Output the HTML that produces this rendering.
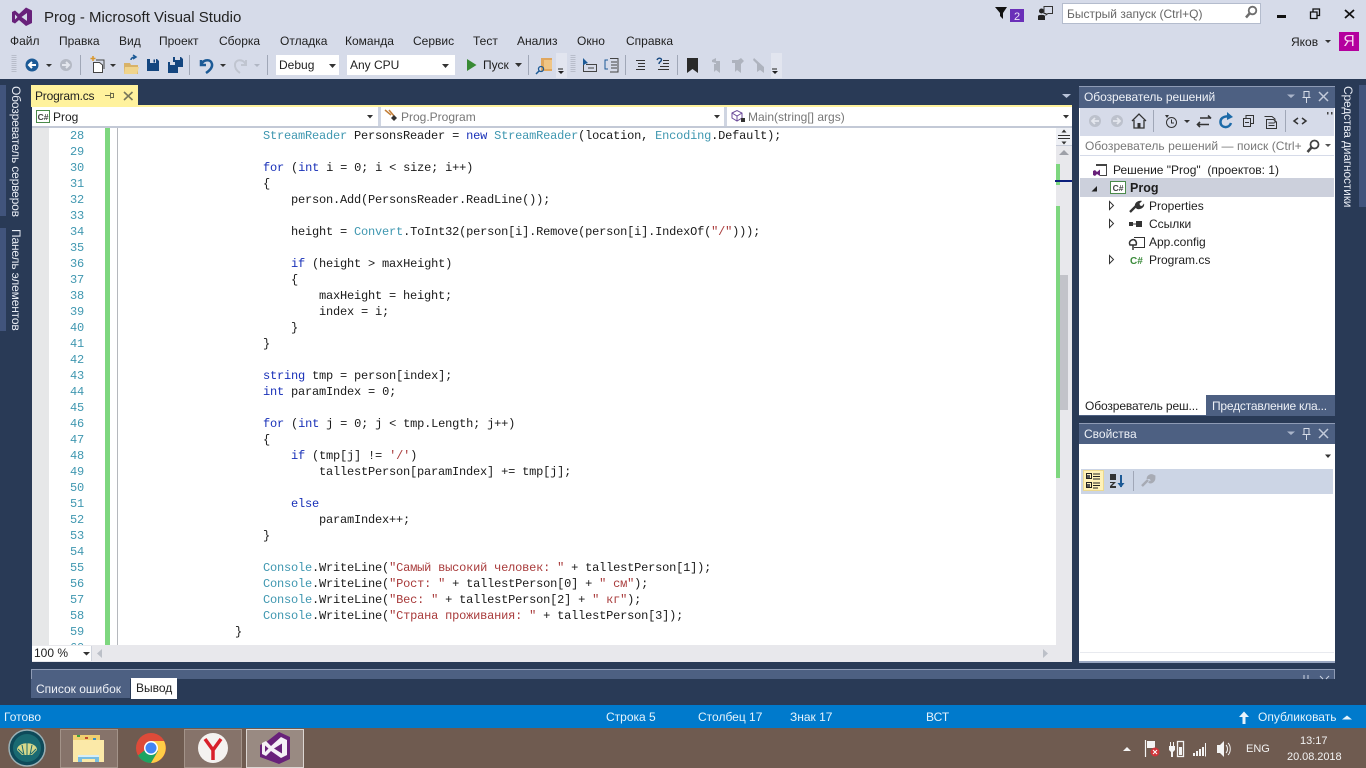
<!DOCTYPE html>
<html lang="ru"><head><meta charset="utf-8"><title>Prog - Microsoft Visual Studio</title>
<style>
html,body{margin:0;padding:0;width:1366px;height:768px;overflow:hidden;background:#293a56}
body{position:relative;font-family:"Liberation Sans","DejaVu Sans",sans-serif;font-size:12px;color:#1e1e1e}
.b{position:absolute}
.t{position:absolute;white-space:nowrap;line-height:16px;font-size:12px}
.v{position:absolute;white-space:nowrap;line-height:14px;font-size:12px;color:#e8ecf4;transform-origin:0 0;transform:rotate(90deg);letter-spacing:-.17px}
pre{position:absolute;margin:0;font-family:"Liberation Mono","DejaVu Sans Mono",monospace;font-size:12px;line-height:16px;letter-spacing:-.2px;color:#1a1a1a}
i{font-style:normal;color:#1830b8}
u{text-decoration:none;color:#3f97b0}
s{text-decoration:none;color:#a83a3a}
</style></head><body>
<!-- chrome -->
<div class="b" style="left:0;top:0;width:1366px;height:79px;background:#d6dbe9"></div>
<div class="b" style="left:556px;top:53px;width:11px;height:25px;background:#e2e5ef"></div>
<div class="b" style="left:771px;top:53px;width:11px;height:25px;background:#e2e5ef"></div>
<div class="b" style="left:0;top:79px;width:1366px;height:626px;background:#293a56"></div>
<div class="b" style="left:0;top:705px;width:1366px;height:23px;background:#007acc"></div>
<div class="b" style="left:0;top:728px;width:1366px;height:40px;background:#6f5b50"></div>

<div class="t" style="left:44px;top:9px;font-size:15px;line-height:18px;color:#222">Prog - Microsoft Visual Studio</div>
<div class="t" style="left:10px;top:33px">Файл</div>
<div class="t" style="left:59px;top:33px">Правка</div>
<div class="t" style="left:119px;top:33px">Вид</div>
<div class="t" style="left:159px;top:33px">Проект</div>
<div class="t" style="left:219px;top:33px">Сборка</div>
<div class="t" style="left:280px;top:33px">Отладка</div>
<div class="t" style="left:345px;top:33px">Команда</div>
<div class="t" style="left:413px;top:33px">Сервис</div>
<div class="t" style="left:473px;top:33px">Тест</div>
<div class="t" style="left:517px;top:33px">Анализ</div>
<div class="t" style="left:577px;top:33px">Окно</div>
<div class="t" style="left:626px;top:33px">Справка</div>

<div class="b" style="left:276px;top:55px;width:63px;height:20px;background:#fff"></div>
<div class="t" style="left:279px;top:57px">Debug</div>
<div class="b" style="left:347px;top:55px;width:108px;height:20px;background:#fff"></div>
<div class="t" style="left:350px;top:57px">Any CPU</div>
<div class="t" style="left:483px;top:57px">Пуск</div>

<div class="b" style="left:1062px;top:3px;width:197px;height:19px;background:#fff;border:1px solid #b4bccd"></div>
<div class="t" style="left:1067px;top:6px;color:#666">Быстрый запуск (Ctrl+Q)</div>
<div class="t" style="left:1291px;top:34px">Яков</div>
<div class="b" style="left:1339px;top:32px;width:20px;height:19px;background:#b4009e;color:#f7d3ef;font-size:16px;line-height:19px;text-align:center">Я</div>

<!-- side bars -->
<div class="b" style="left:0;top:85px;width:6px;height:131px;background:#41547c"></div>
<div class="b" style="left:0;top:228px;width:6px;height:103px;background:#41547c"></div>
<div class="v" style="left:23px;top:86px">Обозреватель серверов</div>
<div class="v" style="left:23px;top:229px">Панель элементов</div>
<div class="b" style="left:1359px;top:85px;width:7px;height:122px;background:#41547c"></div>
<div class="v" style="left:1355px;top:86px">Средства диагностики</div>

<!-- tab -->
<div class="b" style="left:31px;top:85px;width:107px;height:20px;background:#fff29d"></div>
<div class="t" style="left:35px;top:88px;color:#222;letter-spacing:-.2px">Program.cs</div>
<div class="b" style="left:31px;top:105px;width:1041px;height:2px;background:#fff29d"></div>

<!-- nav bar -->
<div class="b" style="left:32px;top:107px;width:346px;height:19px;background:#fff"></div>
<div class="b" style="left:381px;top:107px;width:343px;height:19px;background:#fff"></div>
<div class="b" style="left:727px;top:107px;width:345px;height:19px;background:#fff"></div>
<div class="b" style="left:32px;top:126px;width:1040px;height:2px;background:#c3c9d6"></div>
<div class="b" style="left:378px;top:107px;width:3px;height:19px;background:#cfd5e2"></div>
<div class="b" style="left:724px;top:107px;width:3px;height:19px;background:#cfd5e2"></div>
<div class="t" style="left:53px;top:109px">Prog</div>
<div class="t" style="left:401px;top:109px;color:#777">Prog.Program</div>
<div class="t" style="left:748px;top:109px;color:#777">Main(string[] args)</div>

<!-- editor -->
<div class="b" style="left:32px;top:128px;width:1040px;height:534px;background:#e8e8ec"></div>
<div class="b" style="left:49px;top:128px;width:1007px;height:517px;background:#fff"></div>
<div class="b" style="left:32px;top:128px;width:17px;height:517px;background:#e6e7e8"></div>
<div class="b" style="left:105px;top:128px;width:5px;height:517px;background:#7ed77f"></div>
<div class="b" style="left:117px;top:128px;width:1px;height:517px;background:#b5b8bd"></div>
<div class="b" style="left:49px;top:128px;width:1007px;height:517px;overflow:hidden">
<pre style="left:0;top:0;width:35px;text-align:right;color:#3f97b0">28
29
30
31
32
33
34
35
36
37
38
39
40
41
42
43
44
45
46
47
48
49
50
51
52
53
54
55
56
57
58
59
60</pre>
<pre style="left:74px;top:0">                    <u>StreamReader</u> PersonsReader = <i>new</i> <u>StreamReader</u>(location, <u>Encoding</u>.Default);

                    <i>for</i> (<i>int</i> i = 0; i &lt; size; i++)
                    {
                        person.Add(PersonsReader.ReadLine());

                        height = <u>Convert</u>.ToInt32(person[i].Remove(person[i].IndexOf(<s>"/"</s>)));

                        <i>if</i> (height &gt; maxHeight)
                        {
                            maxHeight = height;
                            index = i;
                        }
                    }

                    <i>string</i> tmp = person[index];
                    <i>int</i> paramIndex = 0;

                    <i>for</i> (<i>int</i> j = 0; j &lt; tmp.Length; j++)
                    {
                        <i>if</i> (tmp[j] != <s>'/'</s>)
                            tallestPerson[paramIndex] += tmp[j];

                        <i>else</i>
                            paramIndex++;
                    }

                    <u>Console</u>.WriteLine(<s>"Самый высокий человек: "</s> + tallestPerson[1]);
                    <u>Console</u>.WriteLine(<s>"Рост: "</s> + tallestPerson[0] + <s>" см"</s>);
                    <u>Console</u>.WriteLine(<s>"Вес: "</s> + tallestPerson[2] + <s>" кг"</s>);
                    <u>Console</u>.WriteLine(<s>"Страна проживания: "</s> + tallestPerson[3]);
                }</pre>
</div>
<!-- scrollbar -->
<div class="b" style="left:1056px;top:128px;width:16px;height:18px;background:#eef0f5;border-bottom:1px solid #c6cbd8;box-sizing:border-box"></div>
<div class="b" style="left:1060px;top:275px;width:8px;height:135px;background:#c2c3c9"></div>
<div class="b" style="left:1056px;top:164px;width:4px;height:21px;background:#7ed77f"></div>
<div class="b" style="left:1056px;top:206px;width:4px;height:272px;background:#7ed77f"></div>
<div class="b" style="left:1055px;top:180px;width:17px;height:2px;background:#0b1f7c"></div>
<!-- zoom -->
<div class="b" style="left:32px;top:646px;width:59px;height:15px;background:#fff;border-right:1px solid #cfd3dc"></div>
<div class="t" style="left:34px;top:646px;line-height:15px">100 %</div>

<!-- solution panel -->
<div class="b" style="left:1079px;top:86px;width:256px;height:329px;background:#fff"></div>
<div class="b" style="left:1079px;top:86px;width:256px;height:22px;background:#4d6082"></div>
<div class="b" style="left:1079px;top:86px;width:256px;height:1px;background:#8e9bb5"></div>
<div class="t" style="left:1084px;top:89px;color:#eef1f7;letter-spacing:-.05px">Обозреватель решений</div>
<div class="b" style="left:1080px;top:108px;width:254px;height:28px;background:#d6dbe9"></div>
<div class="t" style="left:1085px;top:138px;color:#777;letter-spacing:.05px">Обозреватель решений — поиск (Ctrl+</div>
<div class="b" style="left:1080px;top:155px;width:254px;height:1px;background:#d6dbe9"></div>
<div class="t" style="left:1113px;top:162px">Решение "Prog"&nbsp; (проектов: 1)</div>
<div class="b" style="left:1080px;top:178px;width:254px;height:19px;background:#ccd0dc"></div>
<div class="t" style="left:1130px;top:180px;font-weight:bold;font-size:12.5px">Prog</div>
<div class="t" style="left:1149px;top:198px">Properties</div>
<div class="t" style="left:1149px;top:216px">Ссылки</div>
<div class="t" style="left:1149px;top:234px">App.config</div>
<div class="t" style="left:1149px;top:252px">Program.cs</div>
<div class="b" style="left:1206px;top:395px;width:129px;height:20px;background:#4d6082"></div>
<div class="b" style="left:1079px;top:415px;width:256px;height:1px;background:#4d6082"></div>
<div class="t" style="left:1085px;top:398px;letter-spacing:-.12px">Обозреватель реш...</div>
<div class="t" style="left:1212px;top:398px;color:#eef1f7;letter-spacing:-.2px">Представление кла...</div>

<!-- properties panel -->
<div class="b" style="left:1079px;top:423px;width:256px;height:240px;background:#fff"></div>
<div class="b" style="left:1079px;top:423px;width:256px;height:21px;background:#4d6082"></div>
<div class="b" style="left:1079px;top:423px;width:256px;height:1px;background:#8e9bb5"></div>
<div class="t" style="left:1084px;top:426px;color:#eef1f7">Свойства</div>
<div class="b" style="left:1081px;top:469px;width:252px;height:25px;background:#ccd5e5"></div>
<div class="b" style="left:1083px;top:470px;width:21px;height:21px;background:#fff2b8;border:1px solid #ecd98f;box-sizing:border-box"></div>
<div class="b" style="left:1080px;top:652px;width:254px;height:1px;background:#e8eaef"></div>
<div class="b" style="left:1079px;top:661px;width:256px;height:2px;background:#9aa7c1"></div>

<!-- bottom -->
<div class="b" style="left:31px;top:669px;width:1304px;height:10px;background:#4d6082;border:1px solid #8e9bb5;border-bottom:0;box-sizing:border-box"></div>
<div class="b" style="left:31px;top:679px;width:99px;height:19px;background:#4d6082"></div>
<div class="t" style="left:36px;top:681px;color:#eef1f7">Список ошибок</div>
<div class="b" style="left:131px;top:678px;width:46px;height:21px;background:#fff"></div>
<div class="t" style="left:136px;top:680px">Вывод</div>

<!-- status -->
<div class="t" style="left:4px;top:709px;color:#e6f3fb">Готово</div>
<div class="t" style="left:606px;top:709px;color:#e6f3fb">Строка 5</div>
<div class="t" style="left:698px;top:709px;color:#e6f3fb">Столбец 17</div>
<div class="t" style="left:790px;top:709px;color:#e6f3fb">Знак 17</div>
<div class="t" style="left:926px;top:709px;color:#e6f3fb">ВСТ</div>
<div class="t" style="left:1258px;top:709px;color:#e6f3fb">Опубликовать</div>

<!-- taskbar -->
<div class="b" style="left:60px;top:729px;width:56px;height:37px;background:#86736a;border:1px solid #a39389"></div>
<div class="b" style="left:184px;top:729px;width:56px;height:37px;background:#86736a;border:1px solid #a39389"></div>
<div class="b" style="left:246px;top:729px;width:56px;height:37px;background:#998a82;border:1px solid #dcd6d2"></div>
<div class="t" style="left:1246px;top:741px;color:#f2f2f2;font-size:11px">ENG</div>
<div class="t" style="left:1300px;top:733px;color:#f2f2f2;font-size:11px">13:17</div>
<div class="t" style="left:1287px;top:749px;color:#f2f2f2;font-size:11px;letter-spacing:-.05px">20.08.2018</div>

<!-- icons overlay -->
<svg class="b" style="left:0;top:0" width="1366" height="768" viewBox="0 0 1366 768" fill="none">
<!-- VS logo -->
<path fill-rule="evenodd" fill="#68217a" d="M12 12L15 10.500 19 14 26 7.500 32 10.500V23L26 26 19 20 15 23.500 12 22ZM15 14.500V19.500L17.500 17ZM21.500 17L27 21V13Z"/>
<!-- grips -->
<path stroke="#b8bdca" stroke-dasharray="1 1" stroke-width="5" d="M14 55V73M573 55V73"/>
<!-- back/fwd -->
<circle cx="32" cy="65" r="6.500" fill="#1c5a96"/><path stroke="#fff" stroke-width="2" d="M36 65H29M32 62L29 65 32 68"/>
<path fill="#333" d="M46 64h6l-3 3zM110 64h6l-3 3zM220 64h6l-3 3zM515 63h7l-3.500 4z"/>
<circle cx="66" cy="65" r="6" fill="#b4b9c4"/><path stroke="#e4e7ee" stroke-width="2" d="M62 65H69M66 62L69 65 66 68"/>
<path stroke="#a0a7b7" d="M80.500 55V75M189.500 55V75M267.500 55V75M528.500 55V75M625.500 55V75M677.500 55V75M1133.500 471V491M1153.500 110V132M1285.500 110V132"/>
<!-- new project -->
<path stroke="#444" fill="#fff" d="M93.500 62.500H99.500L102.500 65V72.500H93.500Z"/><path stroke="#444" d="M96 60H104V69"/><path stroke="#d9962a" stroke-width="1.500" d="M93 56V61M90.500 58.500H95.500"/>
<!-- open -->
<path fill="#d8b268" d="M124 63H130L131 65H138V74H124Z"/><path fill="#f0d48c" d="M125 67H139L137 74H124Z"/><path stroke="#1c5a96" stroke-width="1.500" d="M131 60C131 58 133 57 135 57M133 55L136 57 133 59"/>
<!-- save -->
<path fill="#14467f" d="M147 59H157L159 61V71H147Z"/><path fill="#d6dbe9" d="M150 59H156V63H150Z"/><path fill="#14467f" d="M153.500 59.500h1.500v3h-1.500z"/><path fill="#14467f" d="M147 64H159V71H147Z"/>
<path fill="#14467f" d="M173 57H181L183 59V67H173ZM168 62H176L178 64V73H168Z"/><path fill="#d6dbe9" d="M170 62h5v3h-5zM175 57h5v3h-5z"/>
<!-- undo / redo -->
<path stroke="#1c5a96" stroke-width="2.500" d="M201 60V65H206M201.500 64C204 59 211 59 212 64 212.800 68 209 71 206 73"/>
<path stroke="#c0c5d0" stroke-width="2" d="M246 60V65H241M245.500 64C243 59 236 59 235 64 234.500 68 237 71 240 73"/>
<path fill="#b0b6c3" d="M254 64h6l-3 3z"/>
<!-- combo arrows -->
<path fill="#333" d="M329 64h7l-3.500 4zM442 64h7l-3.500 4zM367 115h6l-3 3.500zM714 115h6l-3 3.500zM1063 115h6l-3 3.500zM1325 454.500h6l-3 3.500zM83 652h7l-3.500 3.500zM1325 40h6l-3 3z"/>
<!-- play -->
<path fill="#388a34" d="M467 59L476.500 65 467 71Z"/>
<!-- find in files -->
<path fill="#e0a75e" d="M541 58H552V71H541Z"/><path fill="#f0c584" d="M544 60H552V69H544Z"/><circle cx="541" cy="69" r="2.500" stroke="#1c5a96" stroke-width="1.300"/><path stroke="#1c5a96" stroke-width="1.500" d="M539 71L536 74"/>
<!-- overflow -->
<path fill="#222" d="M558 68.500h5v1h-5zM558 71h6l-3 3zM772 68.500h5v1h-5zM772 71h6l-3 3z"/>
<!-- debug tools -->
<path fill="#1c5a96" d="M583 58L588 63 585 64 583 66Z"/><path stroke="#444" d="M586 64.500H596.500V71.500H583.500V65"/><path stroke="#444" d="M588 68H594"/>
<path stroke="#1c5a96" d="M608 60H605V69H608"/><path stroke="#444" d="M610 58.500H618V72H610M611 62H617M611 65H617M611 68H617"/>
<path stroke="#333" d="M636 60.500H645M638 63.500H645M638 66.500H645M636 69.500H645"/>
<path stroke="#14467f" stroke-width="1.400" d="M657 60C658 57 663 58 661 61 660 62 659 62 659 64"/><path stroke="#333" d="M663 60.500H669M663 63.500H669M660 66.500H669M658 69.500H669"/>
<path fill="#2a2a2a" d="M687 58H698V73L692.500 69 687 73Z"/>
<path fill="#aeb3be" d="M712 60L716 58V61H720V73L716 70 714 72V64H716V63L712 62ZM732 60H738L741 58 744 61 741 64V73L737 70 735 72V63H732ZM754 58L764 67V73L760 70 757 72V64L753 60Z"/>
<!-- top-right -->
<path fill="#111" d="M995 7H1007L1003 13V19L1000 16V13Z"/>
<rect x="1010" y="9" width="14" height="13" fill="#6a2fb8"/>
<text x="1017" y="20" font-family="Liberation Sans" font-size="11" fill="#ece4f8" text-anchor="middle">2</text>
<circle cx="1041.500" cy="11" r="2.500" fill="#222"/><path fill="#222" d="M1038 20V16C1038 14.500 1045 14.500 1045 16V20Z"/><path stroke="#333" d="M1044 6.500H1052.500V13.500H1048L1046 15V13.500H1044Z"/>
<circle cx="1252.500" cy="10.500" r="3.800" stroke="#6e6e6e" stroke-width="1.800"/><path stroke="#6e6e6e" stroke-width="2.500" d="M1249.500 13.500L1246 17.500"/>
<path fill="#111" d="M1277 15h9v3h-9z"/>
<path stroke="#111" stroke-width="1.300" d="M1310.500 12H1317V18.500H1310.500Z M1313 11.500V9H1319.500V15.500H1317"/>
<path stroke="#111" stroke-width="1.800" d="M1345 10L1354 18M1354 10L1345 18"/>
<!-- tab icons -->
<path stroke="#6a6a4a" d="M105 95.500H110M110.500 92.500V98.500M110.500 93.500H113.500M110.500 97.500H113.500M113.500 93V98"/>
<path stroke="#77775a" stroke-width="1.600" d="M124 92L132.500 100M132.500 92L124 100"/>
<path fill="#b8c3d8" d="M1062 94h9l-4.500 4z"/>
<!-- C# nav icon -->
<rect x="36.500" y="110.500" width="13" height="12" fill="#fff" stroke="#4a8a4a"/>
<text x="43" y="120" font-family="Liberation Sans" font-size="8.500" font-weight="bold" fill="#444" text-anchor="middle">C#</text>
<!-- class/method icons -->
<path stroke="#c4803a" stroke-width="1.500" d="M385 110L391 115M389 110L394 116"/><path fill="#333" d="M391 118l3-3 3 3-3 3z"/>
<path stroke="#6b4a9a" d="M732 113L737 110.500 742 113V118L737 121 732 118ZM732 113L737 116 742 113M737 116V121"/><rect x="741" y="118" width="4" height="4" fill="#333"/>
<!-- scrollbar arrows -->
<path stroke="#333" d="M1058 135.500H1070M1058 138.500H1070"/><path fill="#333" d="M1064 129.500l-2.500 3h5zM1064 144.500l-2.500-3h5z"/>
<path fill="#9ea0a8" d="M1064 150l-5 5h10z"/>
<path fill="#bcc0c8" d="M97 653.500l5-4.500v9zM1048 653.500l-5-4.500v9z"/>
<!-- panel header icons -->
<path fill="#aab5ca" d="M1287 94.500h8l-4 3.500zM1287 431.500h8l-4 3.500z"/>
<path stroke="#d6dce8" d="M1304 91.500V97.500H1309V91.500ZM1306.500 98V103M1302.500 97.500H1310.500"/>
<path stroke="#d6dce8" d="M1304 428.500V434.500H1309V428.500ZM1306.500 435V440M1302.500 434.500H1310.500"/>
<path stroke="#c3cbdb" stroke-width="1.500" d="M1319 92L1328 101M1328 92L1319 101M1319 429L1328 438M1328 429L1319 438"/>
<!-- solution toolbar -->
<circle cx="1095" cy="121" r="6" fill="#bcc1cc"/><path stroke="#e4e7ee" stroke-width="1.800" d="M1099 121H1092M1095 118L1092 121 1095 124"/>
<circle cx="1117" cy="121" r="6" fill="#bcc1cc"/><path stroke="#e4e7ee" stroke-width="1.800" d="M1113 121H1120M1117 118L1120 121 1117 124"/>
<path stroke="#333" stroke-width="1.300" d="M1132 121L1139 114 1146 121M1134 120V128H1144V120"/><path fill="#333" d="M1137.500 123h3v5h-3z"/>
<circle cx="1171.500" cy="122.500" r="5" stroke="#333"/><path stroke="#333" d="M1171.500 119.500V123H1174"/><path fill="#333" d="M1165 115h4l-2 3z"/>
<path fill="#333" d="M1184 120h6l-3 3z"/>
<path stroke="#333" stroke-width="1.600" d="M1200 118H1210M1208 115.500L1211 118.500M1198 124.500H1209M1200 122L1197.500 124.500 1200 127"/>
<path stroke="#1c6aa8" stroke-width="2.500" d="M1230.500 117.500C1227 115 1220 117 1220.500 122.500 1221 128 1229 129 1231 123"/><path fill="#1c6aa8" d="M1227 112V120L1233 117Z"/>
<path stroke="#333" d="M1243.500 118.500H1250.500V126.500H1243.500ZM1246 118V115.500H1253.500V123.500H1251M1245 122.500H1249"/>
<path stroke="#333" d="M1264.500 116.500H1272L1275 119V123M1266.500 119.500H1273.500L1276.500 122V128.500H1266.500ZM1268.500 123H1274.500M1268.500 125.500H1274.500"/>
<path stroke="#333" stroke-width="1.500" d="M1298 118L1294 121 1298 124M1302 118L1306 121 1302 124"/>
<path fill="#444" d="M1327 112h1.500v2.500H1327zM1331 112h1.500v2.500H1331z"/>
<circle cx="1314.500" cy="144.500" r="4" stroke="#444" stroke-width="1.800"/><path stroke="#444" stroke-width="2.500" d="M1311.500 147.500L1307.500 152"/>
<path fill="#555" d="M1325 144h6l-3 3z"/>
<!-- tree icons -->
<path stroke="#444" d="M1096 164.500H1106.500V175.500H1100"/><path fill="#444" d="M1096 164h10v2h-10z"/>
<path fill="#68217a" d="M1093 171L1095 170 1097 172 1100 169.500V176L1097 174 1095 176 1093 175Z"/>
<path fill="#222" d="M1091.500 191.500l5.500-5.500v5.500z"/>
<rect x="1110.500" y="181.500" width="15" height="12" fill="#fff" stroke="#4a8a4a"/>
<text x="1118" y="191" font-family="Liberation Sans" font-size="8.500" font-weight="bold" fill="#444" text-anchor="middle">C#</text>
<path stroke="#333" fill="#fff" d="M1109.500 201.500L1113.500 205.500 1109.500 209.500ZM1109.500 219.500L1113.500 223.500 1109.500 227.500ZM1109.500 255.500L1113.500 259.500 1109.500 263.500Z"/>
<path stroke="#333" stroke-width="2.300" d="M1130 212L1136 206"/><path fill="#333" d="M1135 207C1134 203 1138 200 1142 201L1139.500 203.500 1140 205.500 1142 206 1144 203.500C1145 207 1141 210 1137 209Z"/>
<path fill="#333" d="M1129 222h4v4h-4zM1136 221h6v6h-6z"/><path stroke="#333" d="M1133 224H1136"/>
<path stroke="#333" d="M1134 237.500H1144.500V247.500H1134"/><path stroke="#333" stroke-width="1.500" d="M1133.500 239.500C1130.500 240 1128.500 242 1130 245H1136C1137 243 1136 240 1133.500 239.500M1133 245V250"/>
<text x="1130" y="264" font-family="Liberation Sans" font-size="10" font-weight="bold" fill="#3a8a3a">C#</text>
<!-- properties -->
<path fill="#555" d="M1087 475h3v3h-3zM1087 484h3v3h-3z"/><path stroke="#222" d="M1086.500 473.500H1091.500V478.500H1086.500ZM1086.500 482.500H1091.500V487.500H1086.500ZM1093 474H1100M1093 476.500H1100M1093 479H1100M1093 483H1100M1093 485.500H1100M1093 488H1098"/>
<path fill="#333" d="M1110 474h6v6h-6zM1110 482h6l-4 4h4v2h-6v-2l3-3h-3z"/><path stroke="#1c5a96" stroke-width="2" d="M1121 475V487"/><path fill="#1c5a96" d="M1117.500 483h7l-3.500 4.500z"/>
<path stroke="#a7abb4" stroke-width="2.500" d="M1142 486L1148 480"/><path stroke="#a7abb4" stroke-width="2.800" d="M1148 479C1148 476 1151 475 1153 476L1150.500 478 1152 479.500 1154 478C1154 481 1151 483 1149 481.500"/>
<!-- bottom panel pin/close -->
<path stroke="#cdd4e2" d="M1304 675V679M1308 675V679M1320 676L1323 679M1329 676L1326 679"/>
<!-- status -->
<path fill="#e6f3fb" d="M1244 711.500l-5 5.500h3.500v7h3v-7H1249zM1342 719.500l5-4 5 4z"/>
<!-- taskbar: start orb -->
<circle cx="27" cy="748" r="18" fill="#0e4a5a" stroke="#9ab0b5" stroke-width="1.500"/>
<circle cx="27" cy="748" r="14" fill="#1a6a72"/>
<path fill="#d8d98a" d="M17 750C17 741 37 741 37 750L32 755H22Z"/>
<path stroke="#1a6a72" d="M27 743V755M22 745L24 755M32 745L30 755M18 749L23 754M36 749L31 754"/>
<!-- explorer -->
<path fill="#f1cf6f" d="M73 735H100V741H73Z"/><path fill="#fbe9a8" d="M73 740H104V762H73Z"/><rect x="77" y="735" width="3" height="2" fill="#3ca03c"/><rect x="85" y="737" width="3" height="2" fill="#c04a30"/><rect x="93" y="738" width="3" height="2" fill="#3c90c0"/>
<path fill="#79bde0" d="M78 755H99V762H95V759H82V762H78Z"/><path fill="#d7eef8" d="M78 755H99V757H78Z"/>
<!-- chrome -->
<circle cx="151" cy="748" r="15" fill="#dd4b39"/>
<path fill="#1da462" d="M138 755.500A15 15 0 0 0 151 763L158 751 145 750Z"/>
<path fill="#ffcd46" d="M151 763A15 15 0 0 0 164 741H151L158 751Z"/>
<circle cx="151" cy="748" r="7" fill="#fff"/><circle cx="151" cy="748" r="5.500" fill="#4285f4"/>
<!-- yandex -->
<circle cx="213" cy="748" r="15" fill="#f4f2f0"/>
<path stroke="#d8202a" stroke-width="3.500" d="M205 739L213 750 221 739M213 749V760"/>
<!-- VS taskbar -->
<path fill="#68217a" d="M279 732L290 737V759L279 764 260 757V745L265 743Z"/>
<path fill-rule="evenodd" fill="#f4f0f6" d="M262 743L266 741 271 746 281 737 287 740V755L281 758 271 751 266 756 262 754ZM265 745.500V752L268.500 748.500ZM274 748.500L282 753.500V743.500Z"/>
<!-- tray -->
<path fill="#f4f4f4" d="M1123 751l4-4 4 4z"/>
<path stroke="#f4f4f4" stroke-width="1.200" d="M1145.500 740V757"/><path fill="#f4f4f4" d="M1147 741H1155V748H1147Z"/>
<circle cx="1155" cy="752" r="4.500" fill="#d0353a"/><path stroke="#fff" d="M1153 750L1157 754M1157 750L1153 754"/>
<path fill="#f4f4f4" d="M1169 746H1175V750L1173 752V757H1171V752L1169 750ZM1170 742h1v4h-1zM1173 742h1v4h-1z"/>
<path stroke="#f4f4f4" stroke-width="1.300" d="M1177.500 741.500H1183.500V756.500H1177.500Z"/><path fill="#f4f4f4" d="M1179 747h3v8h-3z"/>
<path fill="#f4f4f4" d="M1193 753h2v3h-2zM1196 751h2v5h-2zM1199 749h2v7h-2zM1202 747h2v9h-2z"/>
<path stroke="#f4f4f4" d="M1205.500 743V756.500"/>
<path fill="#f4f4f4" d="M1217 745H1220L1224 741V757L1220 753H1217Z"/>
<path stroke="#f4f4f4" d="M1226 745C1228 747 1228 751 1226 753M1228 743C1231 746 1231 752 1228 755"/>
</svg>
</body></html>
